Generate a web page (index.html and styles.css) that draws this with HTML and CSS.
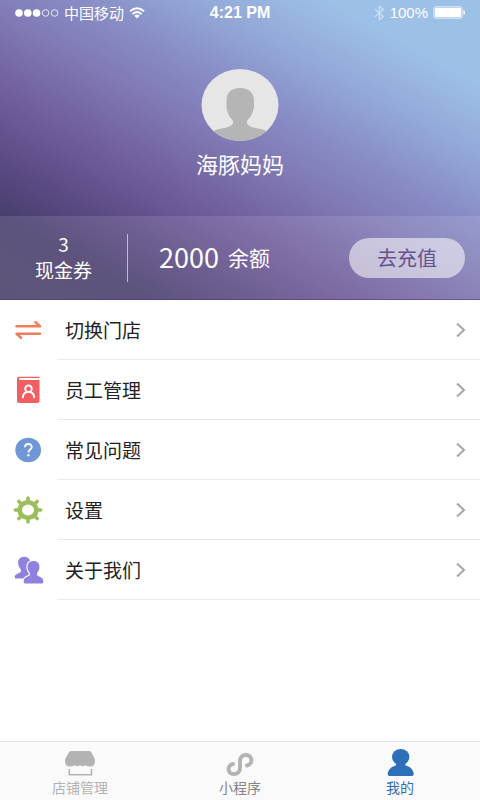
FILE: index.html
```html
<!DOCTYPE html>
<html lang="zh-CN">
<head>
<meta charset="utf-8">
<meta name="viewport" content="width=device-width, initial-scale=1">
<title>我的</title>
<link rel="stylesheet" href="styles.css">
</head>
<body>
<header class="hero">
  <div class="status">
    <div class="status-side">
      <svg width="44" height="10" viewBox="0 0 44 10" fill="#fff" aria-hidden="true"><circle cx="4" cy="5" r="3.8"/><circle cx="12.8" cy="5" r="3.8"/><circle cx="21.6" cy="5" r="3.8"/><g fill="none" stroke="#fff" stroke-width=".8"><circle cx="30.6" cy="5" r="3.3"/><circle cx="39.6" cy="5" r="3.3"/></g></svg>
      <span class="carrier">中国移动</span>
      <svg width="16" height="12" viewBox="0 0 16 12" fill="none" stroke="#fff" stroke-width="1.9" aria-hidden="true"><path d="M.9 4.4Q8-2 15.100 4.400M3.400 7.100Q8 2.900 12.600 7.100"/><path d="M5.300 8.700Q8 6.500 10.700 8.700L8 11.400Z" fill="#fff" stroke="none"/></svg>
    </div>
    <time class="clock">4:21 PM</time>
    <div class="status-side status-right">
      <svg class="bluetooth" width="11" height="16" viewBox="0 0 11 16" fill="none" stroke="#fff" stroke-width="1.200" aria-hidden="true"><path d="M1 4.300 9.300 11.500 5.400 14.700V1.300L9.300 4.500 1 11.700"/></svg>
      <span class="percent">100%</span>
      <svg width="32" height="13" viewBox="0 0 32 13" aria-hidden="true"><rect x=".5" y=".5" width="29" height="12" rx="2.500" fill="#fff" fill-opacity=".35" stroke="#fff" stroke-opacity=".35"/><rect x="2" y="2" width="26" height="9" rx="1" fill="#fff"/><path d="M30.500 4Q32 4.500 32 6.500T30.500 9Z" fill="#fff"/></svg>
    </div>
  </div>
  <div class="profile">
    <svg class="avatar" width="78" height="72" viewBox="0 0 78 72" aria-hidden="true">
      <defs><clipPath id="face"><ellipse cx="39" cy="36" rx="38.500" ry="36"/></clipPath></defs>
      <g clip-path="url(#face)"><rect width="78" height="72" fill="#e6e6e6"/><path d="M39 19C48 19 53 24 53 32V36C53 43 50 47 47 50.500C45 53 45.500 54.500 48 56.500C54 60.500 61 58.500 67 63V72H11V63C17 58.500 24 60.500 30 56.500C32.500 54.500 33 53 31 50.500C28 47 25.500 43 25.500 36V32C25.500 24 30 19 39 19Z" fill="#b5b5b5"/></g>
    </svg>
    <h1 class="name">海豚妈妈</h1>
  </div>
  <div class="stats">
    <div class="coupons"><span>3</span><span>现金券</span></div>
    <div class="balance"><span class="amount">2000</span><span>余额</span></div>
    <button class="recharge" type="button">去充值</button>
  </div>
</header>
<main>
  <ul class="menu">
    <li><a href="#switch">
      <svg class="icon" width="32" height="32" viewBox="0 0 32 32" fill="none" stroke="#ee7d5d" stroke-width="2.500" stroke-linecap="round" stroke-linejoin="round" aria-hidden="true"><path d="M4.500 12.200H28L23.500 8.200M28 19.800H4.500L9 23.800"/></svg>
      <span class="label">切换门店</span>
      <svg class="chevron" width="10" height="16" viewBox="0 0 10 16" aria-hidden="true"><path d="M1 1.500 8 8 1 14.500"/></svg></a></li>
    <li><a href="#staff">
      <svg class="icon" width="32" height="32" viewBox="0 0 32 32" aria-hidden="true"><path d="M6.500 2.700H27.500V4.100H8C6.700 4.100 6.700 6 8 6H27.500V27Q27.500 29 25.500 29H7Q5 29 5 27V5Q5 2.700 6.500 2.700Z" fill="#f15f62"/><g fill="none" stroke="#fff" stroke-width="1.900" stroke-linecap="round"><circle cx="16.500" cy="14.800" r="3.300"/><path d="M10.800 23.400Q11 19.500 14.600 18M22.200 23.400Q22 19.500 18.400 18"/></g></svg>
      <span class="label">员工管理</span>
      <svg class="chevron" width="10" height="16" viewBox="0 0 10 16" aria-hidden="true"><path d="M1 1.500 8 8 1 14.500"/></svg></a></li>
    <li><a href="#faq">
      <svg class="icon" width="32" height="32" viewBox="0 0 32 32" aria-hidden="true"><ellipse cx="16.200" cy="16" rx="12.900" ry="12.200" fill="#6f96d7"/><path d="M13 13.200C13 9 19.700 9 19.700 12.900C19.700 15.600 16.400 15.600 16.400 18.600" fill="none" stroke="#fff" stroke-width="1.900"/><circle cx="16.400" cy="21.200" r="1.200" fill="#fff"/></svg>
      <span class="label">常见问题</span>
      <svg class="chevron" width="10" height="16" viewBox="0 0 10 16" aria-hidden="true"><path d="M1 1.500 8 8 1 14.500"/></svg></a></li>
    <li><a href="#settings">
      <svg class="icon" width="32" height="32" viewBox="0 0 32 32" fill="none" stroke="#9bbf5c" aria-hidden="true"><ellipse cx="16" cy="16" rx="8.300" ry="7.800" stroke-width="4.600"/><g stroke-width="3.600" stroke-linecap="round"><path d="M16 4V7M16 25V28M3.300 16H6M26 16H28.700M6.800 7.500 9 9.500M23 22.500 25.200 24.500M6.800 24.500 9 22.500M23 9.500 25.200 7.500"/></g></svg>
      <span class="label">设置</span>
      <svg class="chevron" width="10" height="16" viewBox="0 0 10 16" aria-hidden="true"><path d="M1 1.500 8 8 1 14.500"/></svg></a></li>
    <li><a href="#about">
      <svg class="icon" width="32" height="32" viewBox="0 0 32 32" fill="#9080df" aria-hidden="true"><path d="M12 2.700C16 2.700 18.500 5 18.500 9.500C18.500 13 17 14.500 16 16C15 18 16.500 19 18.500 20L15 24.500H4Q2.700 24.500 2.700 23C2.700 20 6 20 8.500 18C10 16.500 8.500 15 7.500 13.500C4.500 8 6.500 2.700 12 2.700Z"/><path d="M21.500 7C26.200 7 28 10.500 27.300 14.500C27 16.500 26 17.500 25.300 18.700C24.300 20.500 25 21.500 27 22.500C29.500 23.500 31.300 24 31.300 28Q31.300 29.500 29.500 29.500H13.500Q11.700 29.500 11.700 28C11.700 24 13.500 23.500 16 22.500C18 21.500 18.700 20.500 17.700 18.700C17 17.500 16 16.500 15.700 14.500C15 10.500 16.800 7 21.500 7Z" stroke="#fff" stroke-width="2.400" paint-order="stroke"/></svg>
      <span class="label">关于我们</span>
      <svg class="chevron" width="10" height="16" viewBox="0 0 10 16" aria-hidden="true"><path d="M1 1.500 8 8 1 14.500"/></svg></a></li>
  </ul>
</main>
<nav class="tabs">
  <a class="tab" href="#shop"><svg width="32" height="28" viewBox="0 0 32 28" aria-hidden="true"><path d="M7.500 2H25Q26.500 2 27.300 3.300L30.500 9.500C31.800 13 30.500 17.500 26.500 17.500Q23.500 17.500 21.300 16.200Q18.500 18.200 16 16.200Q13.500 18.200 10.700 16.200Q8.500 17.500 5.500 17.500C1.500 17.500 .2 13 1.500 9.500L4.900 3.300Q5.800 2 7.500 2Z" fill="#b3b3b3"/><path d="M5.300 20V25.800H27.500V20" fill="none" stroke="#b3b3b3" stroke-width="1.500"/></svg><span>店铺管理</span></a>
  <a class="tab mini" href="#mini"><svg width="32" height="28" viewBox="0 0 32 28" fill="none" stroke="#b3b3b3" stroke-width="3.900" stroke-linecap="round" aria-hidden="true"><path d="M9 15C2.500 16.500 3.500 25.200 9.800 25C13.600 25 16 22.500 16 19V12C16 8.300 18.500 6 22 6C28.500 6 29.500 15 23 16.500"/></svg><span>小程序</span></a>
  <a class="tab active" href="#me" aria-current="page"><svg width="32" height="28" viewBox="0 0 32 28" fill="#2e6fb9" aria-hidden="true"><ellipse cx="16.700" cy="8" rx="8.700" ry="8"/><path d="M12 14H21.500V16.500C26.500 17.500 29.500 21 29.700 25Q29.700 27 28 27H5.500Q3.700 27 3.700 25C4 21 7 17.500 12 16.500Z"/></svg><span>我的</span></a>
</nav>
</body>
</html>
```
FILE: styles.css
```css
* { box-sizing: border-box; }

body {
  margin: 0;
  min-height: 100vh;
  display: flex;
  flex-direction: column;
  background: #fff;
  color: #222;
  font-family: "Noto Sans CJK SC", sans-serif;
}

a { color: inherit; text-decoration: none; }
svg { display: block; flex-shrink: 0; }

.hero {
  color: #fff;
  background: linear-gradient(29deg, #4a4168 0%, #493e6e 15%, #5b4b84 25%, #6e5a99 35%, #8079b4 50%, #888bc5 60%, #93a8d7 72%, #9dc0e7 85%, #9dc0e7 100%);
}

.status {
  display: grid;
  grid-template-columns: 1fr auto 1fr;
  align-items: center;
  height: 24px;
  padding: 0 15px;
}
.status-side { display: flex; align-items: center; gap: 5px; }
.status-right { justify-content: flex-end; }
.carrier { font-size: 15px; line-height: 24px; }
.clock { font: bold 16px/24px "Liberation Sans", sans-serif; padding-top: 1px; }
.percent { font: 15px/24px "Liberation Sans", sans-serif; }
.bluetooth { opacity: .5; }

.profile {
  display: flex;
  flex-direction: column;
  align-items: center;
  gap: 8px;
  padding: 45px 0 39px;
}
.name { margin: 0; font-size: 22px; line-height: 28px; font-weight: 400; }

.stats {
  display: flex;
  align-items: center;
  height: 84px;
  padding-right: 15px;
  background: rgba(255, 255, 255, .11);
  border-bottom: 1px solid rgba(70, 50, 130, .5);
}
.coupons {
  display: flex;
  flex-direction: column;
  align-items: center;
  justify-content: center;
  width: 128px;
  height: 48px;
  padding-bottom: 2px;
  border-right: 1px solid rgba(255, 255, 255, .6);
  font-size: 19px;
  line-height: 26px;
}
.balance {
  flex: 1;
  display: flex;
  align-items: center;
  gap: 9px;
  padding-left: 31px;
  padding-bottom: 2px;
  font-size: 21px;
}
.amount { font-size: 27px; }
.recharge {
  width: 116px;
  height: 40px;
  padding: 0;
  border: 0;
  border-radius: 20px;
  background: rgba(255, 255, 255, .55);
  color: #66518f;
  font: 20px/40px "Noto Sans CJK SC", sans-serif;
}

main { flex: 1; }
.menu { margin: 0; padding: 0; list-style: none; }
.menu a {
  display: flex;
  align-items: center;
  height: 60px;
  padding-left: 12px;
}
.label {
  flex: 1;
  margin-left: 13px;
  padding-left: 8px;
  border-bottom: 1px solid #ebebeb;
  font-size: 19px;
  line-height: 59px;
}
.chevron {
  align-self: stretch;
  box-sizing: content-box;
  padding: 22px 14px 21px 0;
  border-bottom: 1px solid #ebebeb;
  fill: none;
  stroke: #a6a6a6;
  stroke-width: 2;
}

.tabs {
  display: grid;
  grid-template-columns: repeat(3, 1fr);
  height: 59px;
  border-top: 1px solid #e4e4e4;
  background: #fafafa;
}
.tab {
  display: flex;
  flex-direction: column;
  align-items: center;
  padding-top: 7px;
  color: #b3b3b3;
  font-size: 14px;
  line-height: 20px;
}
.mini { color: #858585; }
.active { color: #2e6fb9; }
```
